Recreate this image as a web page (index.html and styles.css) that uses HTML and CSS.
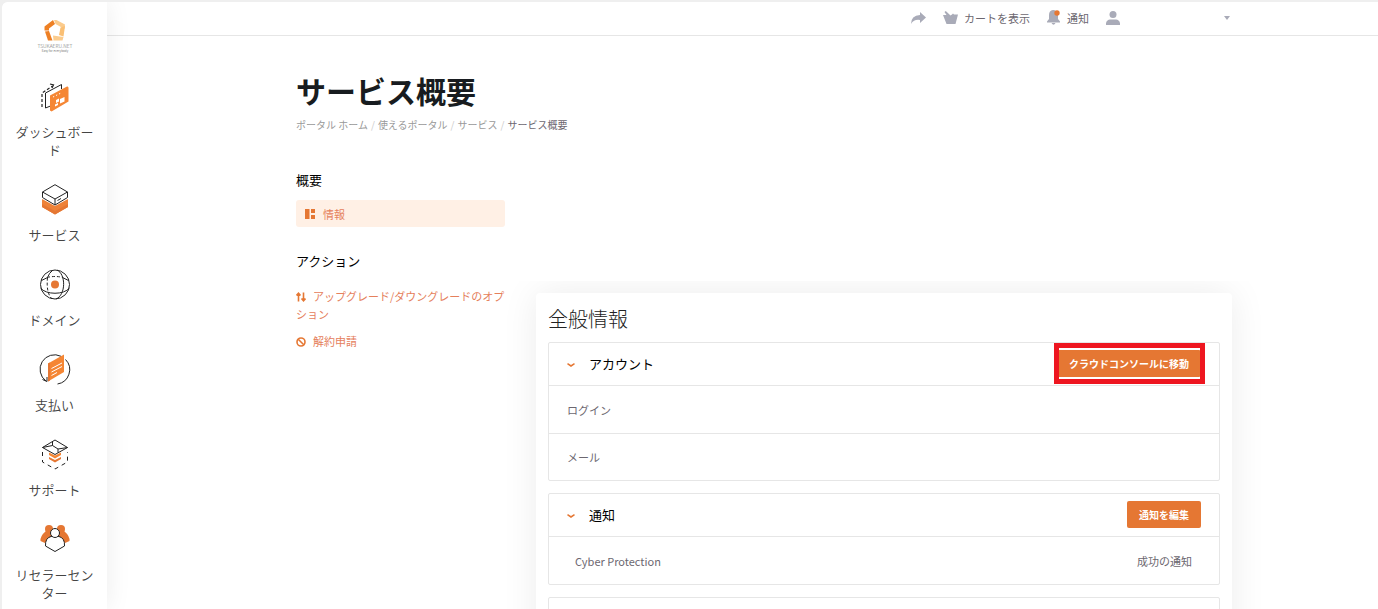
FILE: index.html
```html
<!DOCTYPE html>
<html lang="ja">
<head>
    <meta charset="UTF-8">
    <meta name="viewport" content="width=device-width, initial-scale=1.0">
    <title>サービス概要</title>
    <link rel="stylesheet" href="styles.css">
</head>
<body>

<div class="app">

    <!-- Sidebar -->
    <nav class="sidebar">
        <a href="#" class="logo">
            <svg width="44" height="36" viewBox="-6 0 44 36">
                <path d="M5.500 8.500L14 2L16 6L10 10.500V12.500H5.500z" fill="#ee8024"/>
                <path d="M15 2H17.500L26 6.500L25.500 11L16.500 6z" fill="#fbcb8c"/>
                <path d="M26 8L21.500 9.500L20 17L24.500 18.500z" fill="#fabf74"/>
                <path d="M14 17.500L24.500 19L23.500 22.500H14.500z" fill="#fbcb8c"/>
                <path d="M6 13.500L10 13L13.500 22.500H9z" fill="#ee8024"/>
                <text x="16" y="30" text-anchor="middle" class="logo-name">TSUKAERU.NET</text>
                <text x="16" y="34" text-anchor="middle" class="logo-tag">Easy for everybody</text>
            </svg>
        </a>
        <a href="#" class="nav-item">
            <svg width="32" height="32" viewBox="0 0 32 32" fill="none" stroke="#222">
                <path d="M3 26V12L13.500 5" stroke-width="1.200" stroke-dasharray="3 2"/>
                <path d="M11 3L14.500 4L13 7" stroke-width="1.200"/>
                <path d="M6.500 27V12L22.500 3.500V8M6.500 27l5-2"/>
                <path d="M11 14.500L28 5.500Q29.500 5 29.500 7V20.500L12.500 30.500L11 29.500z" fill="#f58634" stroke="none"/>
                <path d="M14 16l1.200-.6M17 14.500l1.200-.6M20 13l1.200-.6" stroke="#fff"/>
                <path d="M17 19l3-1.500v3l-3 1.500zM21 18l4.500-2v4.500L21 22.500zM16 23.500l3-1.500v2l-3 1.500z" fill="#fff" stroke="none"/>
            </svg>
            <span>ダッシュボード</span>
        </a>
        <a href="#" class="nav-item">
            <svg width="32" height="32" viewBox="0 0 32 32" fill="none" stroke="#222" stroke-linejoin="round">
                <path d="M3 15L16 22L29 15V23L16 30.500L3 23z" fill="#ee8238" stroke="none"/>
                <path d="M3 20L16 27L29 20V23L16 30.500L3 23z" fill="#e57733" stroke="none"/>
                <path d="M3.500 8L16 .7L28.500 8V13.500L16 21L3.500 13.500z" fill="#fff"/>
                <path d="M3.500 8L16 15L28.500 8M16 15v6M18.500 16.500l3.500-2"/>
            </svg>
            <span>サービス</span>
        </a>
        <a href="#" class="nav-item">
            <svg width="32" height="32" viewBox="0 0 32 32" fill="none" stroke="#222">
                <circle cx="16" cy="15.500" r="14.500"/>
                <path d="M1.500 19C7 26 25 26 30.500 19M18 1C27 5 27 26 17 30"/>
                <path d="M8 8.500Q16 6.500 24 8.500M8.500 8.500Q7 24 13 30" stroke-dasharray="3 2"/>
                <path d="M2.500 11.500L8.500 8.500Q10 4 14 1M23.500 8.500L29.500 11.500"/>
                <circle cx="16" cy="15.500" r="4" fill="#e57733" stroke="none"/>
            </svg>
            <span>ドメイン</span>
        </a>
        <a href="#" class="nav-item">
            <svg width="32" height="32" viewBox="0 0 32 32" fill="none" stroke="#222">
                <path d="M22 2.300A14.500 14.500 0 0 0 7 27M26.500 5.500A14.500 14.500 0 0 1 18.500 30"/>
                <path d="M3.500 25.500L8 27.500V23"/>
                <path d="M9 9.500L25 .5V18L9 27.500z" fill="#f58634" stroke="none"/>
                <path d="M9 9.500L11 8.500V26.500L9 27.500z" fill="#e57733" stroke="none"/>
                <path d="M12.500 14.500L23 9M12.500 18L23 12.500M12.500 21.500L18 18.500" stroke="#fff"/>
            </svg>
            <span>支払い</span>
        </a>
        <a href="#" class="nav-item">
            <svg width="32" height="32" viewBox="0 0 32 32" fill="none" stroke="#222" stroke-linejoin="round">
                <path d="M3.500 13V23L16 30L28.500 23V13" stroke-dasharray="4 4"/>
                <path d="M10 18L16 21L22 18V20L16 23.500L10 20z" fill="#e57733" stroke="none"/>
                <path d="M10 13.500L16 16.500L22 13.500V16L16 19.500L10 16z" fill="#f58634" stroke="none"/>
                <path d="M3.500 8.500L16 1L28.500 8.500L16 15.500z" fill="#fff"/>
                <path d="M3.500 8.500L13.500 6.500V3M13.500 6.500L19 10L28.500 8.500M19 10V13.500"/>
            </svg>
            <span>サポート</span>
        </a>
        <a href="#" class="nav-item">
            <svg width="32" height="32" viewBox="0 0 32 32" stroke="#222">
                <g fill="#e57733" stroke="none">
                    <circle cx="10" cy="5" r="4"/>
                    <circle cx="22" cy="5" r="4"/>
                    <path d="M7 7Q1 12 1.500 17L6 19L16 12L26 19L30.500 17Q31 12 25 7L16 10z"/>
                </g>
                <path d="M6.500 22Q6 14 12 12.500H20Q26 14 25.500 22L16 27.500z" fill="#fff"/>
                <circle cx="16" cy="9" r="4.500" fill="#fff"/>
            </svg>
            <span>リセラーセンター</span>
        </a>
    </nav>

    <div class="main">

        <!-- Top bar -->
        <header class="topbar">
            <a href="#" class="top-link" aria-label="共有">
                <svg width="15" height="12" viewBox="0 0 15 12"><path d="M9 0L15 5.500L9 11V8Q3 7 0 12Q0 3.500 9 3z" fill="#a9abb8"/></svg>
            </a>
            <a href="#" class="top-link">
                <svg width="15" height="14" viewBox="0 0 15 14"><path d="M1.500 1L2.800 0L7.500 4.500L9 3.500L10 2.500L11 3.500H15L12.500 13H3.500L0 4H3.500z" fill="#a9abb8"/></svg>
                カートを表示
            </a>
            <a href="#" class="top-link">
                <svg width="14" height="15" viewBox="0 0 14 15">
                    <path d="M6 0Q2 .5 2 5V9L0 11.500V12.500H13V11.500L11 9V5Q10 0 6 0zM4.500 13H8.500Q6.500 16.500 4.500 13z" fill="#a9abb8"/>
                    <circle cx="10" cy="3" r="2.700" fill="#e57733"/>
                </svg>
                通知
            </a>
            <button type="button" class="account" aria-label="アカウントメニュー">
                <svg width="14" height="14" viewBox="0 0 14 14"><circle cx="7" cy="3.500" r="3.500" fill="#a9abb8"/><path d="M0 14V12Q1 8.500 4 8.500H10Q13 8.500 14 12V14z" fill="#a9abb8"/></svg>
                <svg width="6" height="4" viewBox="0 0 6 4"><path d="M0 0H6L3 4z" fill="#a9abb8"/></svg>
            </button>
        </header>

        <div class="content">
            <h1>サービス概要</h1>
            <nav class="breadcrumb">
                <a href="#">ポータル ホーム</a>
                <span class="slash">/</span>
                <a href="#">使えるポータル</a>
                <span class="slash">/</span>
                <a href="#">サービス</a>
                <span class="slash">/</span>
                <span class="current">サービス概要</span>
            </nav>

            <div class="columns">
                <!-- Side menu -->
                <aside class="side-menu">
                    <h2>概要</h2>
                    <a href="#" class="menu-active">
                        <svg width="10" height="10" viewBox="0 0 10 10" fill="#e57733"><path d="M0 0H4.500V10H0zM6 0H10V4H6zM6 6H10V10H6z"/></svg>
                        情報
                    </a>
                    <h2>アクション</h2>
                    <ul class="actions">
                        <li><a href="#"><svg width="10" height="10" viewBox="0 0 10 10" fill="none" stroke="#e57733" stroke-width="1.600"><path d="M2.500 9.500V1.500M.5 3.500L2.500 1.200L4.500 3.500M7.500 .5V8.500M5.500 6.500L7.500 8.800L9.500 6.500"/></svg>アップグレード/ダウングレードのオプション</a></li>
                        <li><a href="#"><svg width="10" height="10" viewBox="0 0 10 10" fill="none" stroke="#e57733" stroke-width="1.600"><circle cx="5" cy="5" r="4"/><path d="M2.200 2.200L7.800 7.800"/></svg>解約申請</a></li>
                    </ul>
                </aside>

                <!-- General info -->
                <section class="card">
                    <h3>全般情報</h3>

                    <div class="panel">
                        <div class="panel-head">
                            <button type="button" class="toggle">
                                <svg width="8" height="4" viewBox="0 0 8 4" fill="none" stroke="#e57733" stroke-width="1.500"><path d="M.5 .7L4 3L7.500 .7"/></svg>
                                アカウント
                            </button>
                            <button type="button" class="btn highlighted">クラウドコンソールに移動</button>
                        </div>
                        <div class="panel-row">ログイン</div>
                        <div class="panel-row">メール</div>
                    </div>

                    <div class="panel">
                        <div class="panel-head">
                            <button type="button" class="toggle">
                                <svg width="8" height="4" viewBox="0 0 8 4" fill="none" stroke="#e57733" stroke-width="1.500"><path d="M.5 .7L4 3L7.500 .7"/></svg>
                                通知
                            </button>
                            <button type="button" class="btn">通知を編集</button>
                        </div>
                        <div class="panel-row inset">
                            <span>Cyber Protection</span>
                            <span>成功の通知</span>
                        </div>
                    </div>

                    <div class="panel">
                        <div class="panel-head"></div>
                    </div>
                </section>
            </div>
        </div>
    </div>
</div>

</body>
</html>
```
FILE: styles.css
```css
* {
    box-sizing: border-box;
}
body {
    margin: 0;
    padding: 2px 0 0 2px;
    height: 100vh;
    overflow: hidden;
    background-color: #efefef;
    font-family: "Noto Sans CJK JP", sans-serif;
    font-size: 11px;
    line-height: 18px;
    color: #6c6770;
}
a {
    color: inherit;
    text-decoration: none;
}
button {
    border: none;
    background: none;
    padding: 0;
    font-family: inherit;
    cursor: pointer;
}
svg {
    flex-shrink: 0;
}
.app {
    display: flex;
    height: 100%;
    background-color: #fff;
    border-radius: 6px 0 0 0;
    overflow: hidden;
}

/* Sidebar */
.sidebar {
    width: 105px;
    flex-shrink: 0;
    padding: 16px 12px 0;
    background-color: #fff;
    box-shadow: 0 0 24px rgba(0, 0, 0, 0.08);
    z-index: 1;
}
.logo {
    display: flex;
    justify-content: center;
    margin-bottom: 27px;
}
.logo-name {
    font-size: 5px;
    font-weight: 300;
    fill: #777;
}
.logo-tag {
    font-size: 3px;
    fill: #777;
}
.nav-item {
    display: flex;
    flex-direction: column;
    align-items: center;
    gap: 10px;
    margin-bottom: 25px;
    font-size: 13px;
    font-weight: 350;
    text-align: center;
    color: #444;
}

/* Top bar */
.main {
    flex: 1;
    min-width: 0;
}
.topbar {
    display: flex;
    align-items: center;
    justify-content: flex-end;
    gap: 17px;
    height: 34px;
    padding: 0 148px 2px 0;
    border-bottom: 1px solid #e6e6e6;
}
.top-link {
    display: flex;
    align-items: center;
    gap: 6px;
}
.account {
    display: flex;
    align-items: center;
    justify-content: space-between;
    width: 124px;
}

/* Page content */
.content {
    padding: 32px 146px 0 189px;
}
h1 {
    margin: 0;
    font-size: 30px;
    line-height: 44px;
    color: #181c20;
}
.breadcrumb {
    display: flex;
    gap: 3px;
    margin-top: 4px;
    font-size: 10px;
    color: #999;
}
.slash {
    color: #ccc;
}
.current {
    color: #6c6770;
}
.columns {
    display: grid;
    grid-template-columns: 209px 1fr;
    gap: 31px;
    margin-top: 36px;
}
.side-menu {
    color: #e5805c;
}
h2 {
    margin: 0;
    font-size: 13px;
    font-weight: 400;
    line-height: 20px;
    color: #000;
}
.menu-active {
    display: flex;
    align-items: center;
    gap: 8px;
    height: 27px;
    margin: 10px 0 24px;
    padding: 0 9px;
    border-radius: 3px;
    background-color: #fff0e5;
}
.actions {
    list-style: none;
    margin: 16px 0 0;
    padding: 0;
}
.actions li {
    margin-bottom: 9px;
}
.actions svg {
    margin-right: 7px;
    vertical-align: -1px;
}

/* Card */
.card {
    margin-top: 123px;
    padding: 12px;
    border-radius: 4px;
    background-color: #fff;
    box-shadow: 0 0 36px rgba(0, 0, 0, 0.08);
    clip-path: inset(-12px -40px -40px -40px);
}
h3 {
    margin: 0 0 9px;
    font-size: 20px;
    font-weight: 200;
    line-height: 28px;
    color: #222;
}
.panel {
    margin-bottom: 12px;
    border: 1px solid #e6e6e6;
    border-radius: 2px;
}
.panel-head {
    display: flex;
    align-items: center;
    justify-content: space-between;
    height: 42px;
    padding: 0 18px 2px;
}
.toggle {
    display: flex;
    align-items: center;
    gap: 14px;
    font-size: 13px;
    color: #000;
}
.toggle svg {
    margin-top: 4px;
}
.panel-row {
    display: flex;
    align-items: center;
    justify-content: space-between;
    height: 48px;
    padding: 0 18px;
    border-top: 1px solid #e6e6e6;
}
.panel-row + .panel-row {
    height: 47px;
}
.panel-row.inset {
    padding: 0 27px 0 26px;
}
.btn {
    height: 27px;
    padding: 0 12px;
    border-radius: 2px;
    background-color: #e57733;
    font-size: 10px;
    font-weight: 700;
    color: #fff;
}
/* red frame around the button to press */
.highlighted {
    position: relative;
}
.highlighted::after {
    content: "";
    position: absolute;
    inset: -7px -4px -7px -3px;
    border: 5px solid #ee1620;
}
```
